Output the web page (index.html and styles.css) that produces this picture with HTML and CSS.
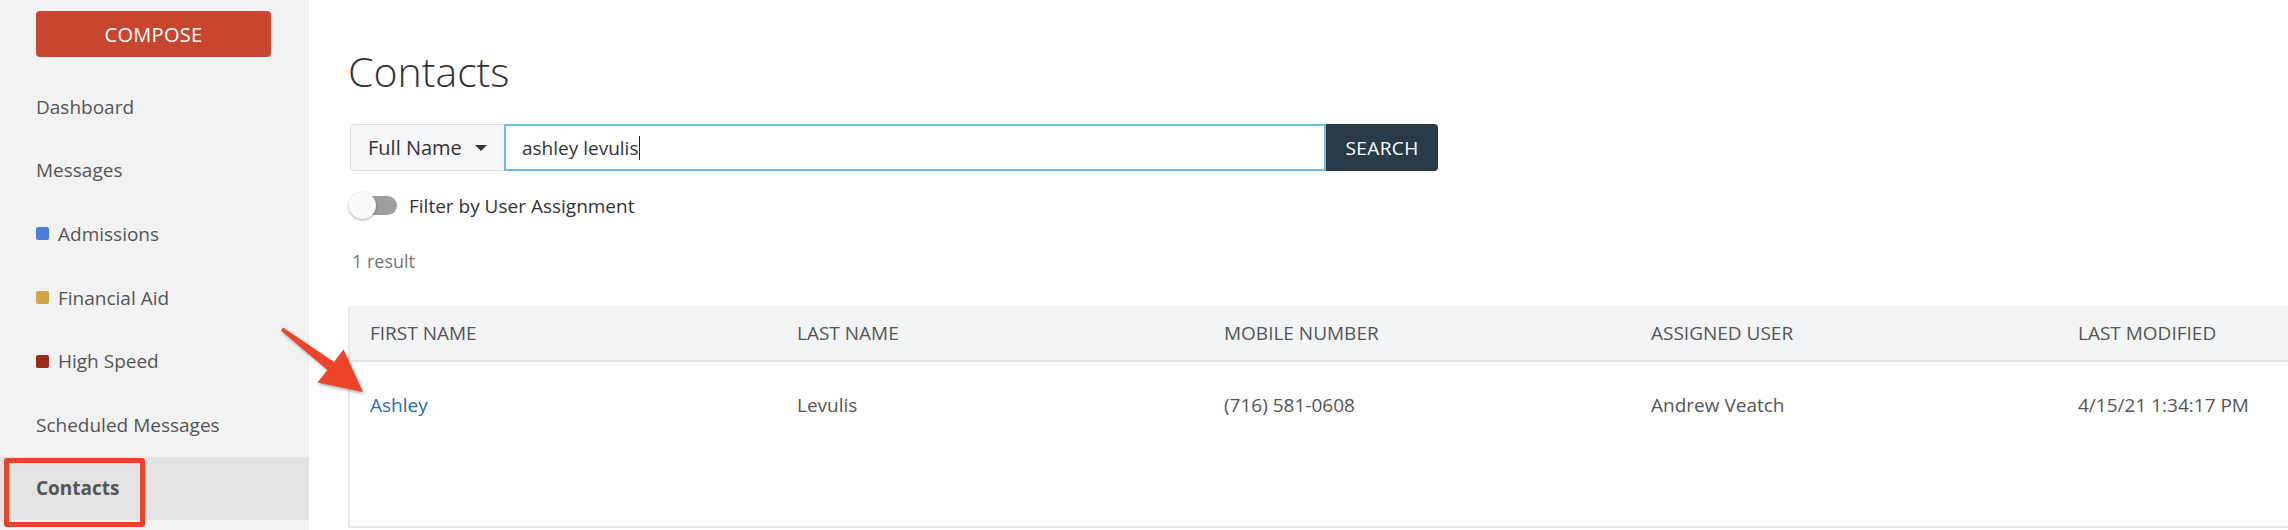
FILE: index.html
```html
<!DOCTYPE html>
<html lang="en">
<head>
<meta charset="utf-8">
<title>Contacts</title>
<link rel="stylesheet" href="styles.css">
</head>
<body>
<div class="app">
  <aside class="sidebar">
    <div class="compose-wrap"><button class="compose">COMPOSE</button></div>
    <nav class="nav">
      <a class="nav-item">Dashboard</a>
      <a class="nav-item">Messages</a>
      <a class="nav-item"><span class="dot dot-blue"></span>Admissions</a>
      <a class="nav-item"><span class="dot dot-gold"></span>Financial Aid</a>
      <a class="nav-item"><span class="dot dot-red"></span>High Speed</a>
      <a class="nav-item">Scheduled Messages</a>
      <a class="nav-item active">Contacts</a>
    </nav>
  </aside>
  <main class="main">
    <h1 class="title">Contacts</h1>
    <div class="search">
      <div class="select">Full Name <span class="caret"></span></div>
      <div class="input"><span class="input-text">ashley levulis</span><span class="cursor"></span></div>
      <button class="search-btn">SEARCH</button>
    </div>
    <div class="filter">
      <span class="toggle"><span class="track"></span><span class="knob"></span></span>
      <span class="filter-label">Filter by User Assignment</span>
    </div>
    <div class="count">1 result</div>
    <div class="table">
      <div class="row head">
        <div class="cell">FIRST NAME</div>
        <div class="cell">LAST NAME</div>
        <div class="cell">MOBILE NUMBER</div>
        <div class="cell">ASSIGNED USER</div>
        <div class="cell">LAST MODIFIED</div>
      </div>
      <div class="row body">
        <div class="cell"><a class="link">Ashley</a></div>
        <div class="cell">Levulis</div>
        <div class="cell">(716) 581-0608</div>
        <div class="cell">Andrew Veatch</div>
        <div class="cell">4/15/21 1:34:17 PM</div>
      </div>
    </div>
  </main>
</div>
<div class="annot-box"></div>
<svg class="arrow" width="2288" height="530" viewBox="0 0 2288 530">
  <polygon points="283,327.5 334,362 343.5,349.5 363,392 317.5,382.5 327.5,370 281,330.5" fill="#ee4326"/>
</svg>
</body>
</html>
```
FILE: styles.css
```css
* { box-sizing: border-box; }
html, body { margin: 0; padding: 0; }
body {
  width: 2288px;
  height: 530px;
  overflow: hidden;
  background: #fff;
  font-family: "Open Sans", "Liberation Sans", sans-serif;
  color: #555;
  position: relative;
}
.app {
  display: flex;
  height: 530px;
}
.sidebar {
  width: 309px;
  flex: 0 0 309px;
  background: #f2f2f2;
  padding-top: 11px;
}
.compose-wrap { padding-left: 36px; }
.compose {
  display: block;
  width: 235px;
  height: 46px;
  border: none;
  border-radius: 4px;
  background: #c8452f;
  color: #fff;
  font-family: "Open Sans", sans-serif;
  font-size: 20px;
  letter-spacing: 0.3px;
  padding: 0;
}
.nav {
  margin-top: 18px;
  display: flex;
  flex-direction: column;
}
.nav-item {
  height: 63.6px;
  display: flex;
  align-items: center;
  padding-left: 36px;
  font-size: 19px;
  color: #555;
}
.nav-item.active {
  background: #e3e3e3;
  font-weight: 700;
}
.dot {
  width: 13px;
  height: 13px;
  border-radius: 2px;
  margin-right: 9px;
  display: inline-block;
}
.dot-blue { background: #4a7fd8; }
.dot-gold { background: #cfa545; }
.dot-red { background: #9a2a1a; }

.main {
  flex: 1;
  padding-left: 39px;
  overflow: hidden;
  min-width: 0;
}
.title {
  margin: 46px 0 0;
  height: 50px;
  line-height: 50px;
  font-size: 41px;
  font-weight: 300;
  color: #333;
}
.search {
  margin-top: 28px;
  margin-left: 2px;
  display: flex;
  height: 47px;
}
.select {
  width: 154px;
  display: flex;
  align-items: center;
  justify-content: space-between;
  padding: 0 17px 0 17px;
  background: #f6f7f8;
  border: 1px solid #dcdfe2;
  border-right: none;
  border-radius: 4px 0 0 4px;
  font-size: 20px;
  color: #333;
}
.caret {
  width: 0;
  height: 0;
  border-left: 6px solid transparent;
  border-right: 6px solid transparent;
  border-top: 6px solid #333;
}
.input {
  width: 822px;
  border: 2px solid #6cbde4;
  display: flex;
  align-items: center;
  padding-left: 16px;
  font-size: 19px;
  color: #333;
}
.cursor {
  width: 1px;
  height: 24px;
  background: #222;
  margin-left: 1px;
}
.search-btn {
  width: 112px;
  border: none;
  background: #293b48;
  color: #fff;
  border-radius: 0 4px 4px 0;
  font-family: "Open Sans", sans-serif;
  font-size: 19px;
  letter-spacing: 0.4px;
  padding: 0;
}
.filter {
  margin-top: 21px;
  display: flex;
  align-items: center;
  height: 27px;
}
.toggle {
  position: relative;
  width: 48px;
  height: 27px;
  display: inline-block;
  margin-left: 1px;
}
.track {
  position: absolute;
  left: 4px;
  top: 4px;
  width: 44px;
  height: 19px;
  border-radius: 10px;
  background: #9e9e9e;
}
.knob {
  position: absolute;
  left: 0;
  top: 0;
  width: 27px;
  height: 27px;
  border-radius: 50%;
  background: #fafafa;
  box-shadow: 0 1px 3px rgba(0,0,0,0.35);
}
.filter-label {
  margin-left: 12px;
  font-size: 19px;
  color: #333;
}
.count {
  margin-top: 30px;
  margin-left: 4px;
  height: 24px;
  line-height: 24px;
  font-size: 18px;
  color: #777;
}
.table {
  margin-top: 33px;
  width: 2137px;
  height: 222px;
  border-left: 2px solid #e8e8e8;
  border-bottom: 2px solid #e8e8e8;
  border-top-left-radius: 4px;
}
.row {
  display: grid;
  grid-template-columns: repeat(5, 427px);
}
.row.head {
  height: 56px;
  background: #f3f4f5;
  border-bottom: 2px solid #e2e3e4;
  border-top-left-radius: 4px;
  font-size: 19px;
  color: #555;
}
.row.body {
  height: 86px;
  font-size: 19px;
  color: #555;
}
.cell {
  display: flex;
  align-items: center;
  padding-left: 20px;
}
.link { color: #2c6bb0; }

.annot-box {
  position: absolute;
  left: 4px;
  top: 458px;
  width: 141px;
  height: 69px;
  border: 5px solid #ea4129;
  border-radius: 3px;
}
.arrow {
  position: absolute;
  left: 0;
  top: 0;
  filter: drop-shadow(1px 2px 1.5px rgba(0,0,0,0.3));
}
```
